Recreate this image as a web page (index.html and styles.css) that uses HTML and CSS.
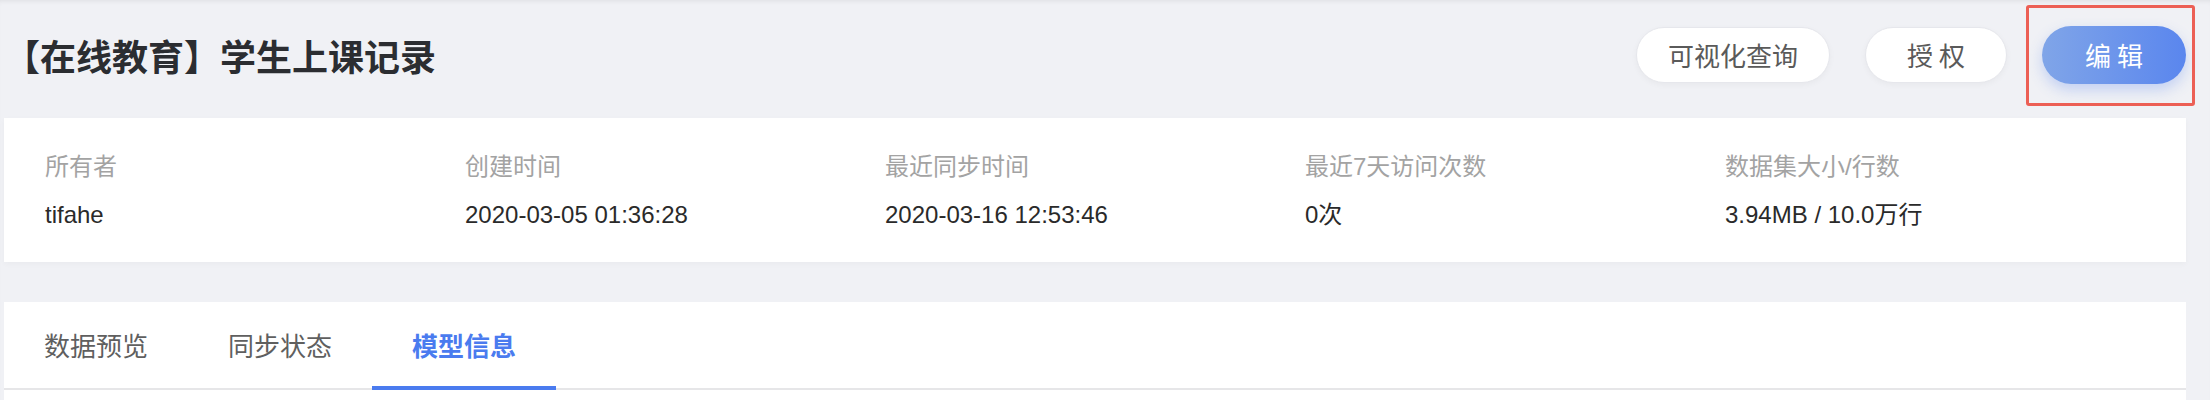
FILE: index.html
```html
<!DOCTYPE html>
<html lang="zh-CN">
<head>
    <meta charset="UTF-8">
    <meta name="viewport" content="width=device-width, initial-scale=1.0">
    <title>数据集详情</title>
    <link rel="stylesheet" href="styles.css">
</head>
<body>
    <div id="page">
        <div class="page-header">
            <h1 class="dataset-title">【在线教育】学生上课记录</h1>
            <div class="header-actions">
                <button class="pill-button">可视化查询</button>
                <button class="pill-button">授 权</button>
                <span class="highlight">
                    <button class="pill-button primary">编 辑</button>
                </span>
            </div>
        </div>

        <div class="info-card">
            <div class="info-item">
                <span class="info-label">所有者</span>
                <span class="info-value">tifahe</span>
            </div>
            <div class="info-item">
                <span class="info-label">创建时间</span>
                <span class="info-value">2020-03-05 01:36:28</span>
            </div>
            <div class="info-item">
                <span class="info-label">最近同步时间</span>
                <span class="info-value">2020-03-16 12:53:46</span>
            </div>
            <div class="info-item">
                <span class="info-label">最近7天访问次数</span>
                <span class="info-value">0次</span>
            </div>
            <div class="info-item">
                <span class="info-label">数据集大小/行数</span>
                <span class="info-value">3.94MB / 10.0万行</span>
            </div>
        </div>

        <div class="tab-card">
            <div class="tab-nav">
                <div class="tab-item">数据预览</div>
                <div class="tab-item">同步状态</div>
                <div class="tab-item active">模型信息</div>
            </div>
            <div class="tab-body"></div>
        </div>
    </div>
</body>
</html>
```

FILE: styles.css
```css
html, body {
    margin: 0;
    overflow: hidden;
}

body {
    font-family: "Liberation Sans", "Noto Sans CJK SC", sans-serif;
    background-color: #f0f1f5;
    color: #2c2c2c;
}

#page {
    padding: 0 24px 0 4px;
    box-shadow: inset 0 4px 5px -3px rgba(0, 0, 0, 0.08);
}

.page-header {
    display: flex;
    align-items: center;
    justify-content: space-between;
    height: 110px;
    margin-bottom: 8px;
}

.dataset-title {
    margin: 0;
    font-family: "Noto Sans CJK SC", sans-serif;
    font-size: 36px;
    font-weight: bold;
    line-height: 40px;
    color: #2b2d31;
}

.header-actions {
    display: flex;
    align-items: center;
    gap: 35px;
}

.pill-button {
    min-width: 142px;
    height: 56px;
    padding: 0 31px;
    border: 1px solid #e6e7ec;
    border-radius: 28px;
    background-color: #ffffff;
    color: #5a5a5a;
    font-family: "Noto Sans CJK SC", sans-serif;
    font-size: 26px;
    line-height: 1;
    cursor: pointer;
    box-shadow: 0 2px 6px rgba(0, 0, 0, 0.04);
}

.pill-button.primary {
    min-width: 144px;
    height: 58px;
    border: none;
    border-radius: 29px;
    background: linear-gradient(90deg, #80a5e8, #5a86ee);
    color: #ffffff;
    box-shadow: 0 6px 14px rgba(90, 134, 238, 0.3);
}

/* annotation frame drawn over the edit button */
.highlight {
    position: relative;
    display: inline-flex;
}

.highlight::after {
    content: "";
    position: absolute;
    top: -21px;
    right: -9px;
    bottom: -22px;
    left: -16px;
    border: 3px solid #ec5f55;
    border-radius: 3px;
    pointer-events: none;
}

.info-card {
    display: grid;
    grid-template-columns: repeat(5, 1fr);
    padding: 37px 41px 35px;
    background: #ffffff;
    box-shadow: 0 2px 6px rgba(0, 0, 0, 0.03);
}

.info-item {
    display: flex;
    flex-direction: column;
    gap: 24px;
}

.info-label {
    font-size: 24px;
    line-height: 24px;
    color: #a3a3a3;
}

.info-value {
    font-size: 24px;
    line-height: 24px;
    color: #2a2a2a;
}

.tab-card {
    margin-top: 40px;
    background: #ffffff;
}

.tab-nav {
    display: flex;
    border-bottom: 2px solid #e6e6e8;
}

.tab-item {
    box-sizing: border-box;
    height: 88px;
    margin-bottom: -2px;
    padding: 0 40px;
    border-bottom: 4px solid transparent;
    display: flex;
    align-items: center;
    font-family: "Noto Sans CJK SC", sans-serif;
    font-size: 26px;
    color: #5f5f5f;
    cursor: pointer;
}

.tab-item.active {
    color: #4a7bef;
    font-weight: bold;
    border-bottom-color: #4a7bef;
}

.tab-body {
    height: 60px;
}
```
